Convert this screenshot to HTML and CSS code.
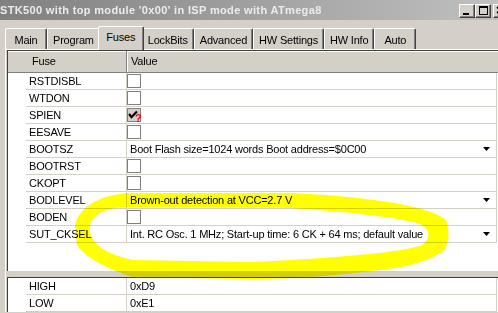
FILE: index.html
```html
<!DOCTYPE html>
<html>
<head>
    <title>STK500</title>
    <meta charset="utf-8">
    <link rel="stylesheet" href="styles.css">
</head>
<body>
    <div class="window">
        <div class="titlebar">
            <span class="title">STK500 with top module '0x00' in ISP mode with ATmega8</span>
            <div class="caption-btns">
                <span class="cbtn"><i class="glyph-min"></i></span>
                <span class="cbtn"><i class="glyph-max"></i></span>
                <span class="cbtn cbtn-close">
                    <svg width="14" height="12" viewBox="0 0 14 12"><path d="M3 2 L9 8 M9 2 L3 8" stroke="#000" stroke-width="1.6"/></svg>
                </span>
            </div>
        </div>

        <div class="tabs">
            <div class="tab">Main</div>
            <div class="tab">Program</div>
            <div class="tab active">Fuses</div>
            <div class="tab">LockBits</div>
            <div class="tab">Advanced</div>
            <div class="tab">HW Settings</div>
            <div class="tab">HW Info</div>
            <div class="tab">Auto</div>
        </div>

        <div class="panel">
            <div class="grid grid-fuses">
                <div class="grid-head">
                    <div class="hcell hcell-name">Fuse</div>
                    <div class="hcell hcell-value">Value</div>
                </div>
                <div class="row"><div class="name">RSTDISBL</div><div class="value"><span class="check"></span></div></div>
                <div class="row"><div class="name">WTDON</div><div class="value"><span class="check"></span></div></div>
                <div class="row">
                    <div class="name">SPIEN</div>
                    <div class="value">
                        <span class="check checked">
                            <svg width="12" height="12" viewBox="0 0 12 12"><path d="M1 4 L3.5 7 L9 1.5" fill="none" stroke="#000" stroke-width="2.2"/></svg>
                            <b class="unsure">?</b>
                        </span>
                    </div>
                </div>
                <div class="row"><div class="name">EESAVE</div><div class="value"><span class="check"></span></div></div>
                <div class="row">
                    <div class="name">BOOTSZ</div>
                    <div class="value"><span>Boot Flash size=1024 words Boot address=$0C00</span><svg class="arrow" width="7" height="4" viewBox="0 0 7 4"><path d="M0 0 H7 L3.5 4 Z"/></svg></div>
                </div>
                <div class="row"><div class="name">BOOTRST</div><div class="value"><span class="check"></span></div></div>
                <div class="row"><div class="name">CKOPT</div><div class="value"><span class="check"></span></div></div>
                <div class="row">
                    <div class="name">BODLEVEL</div>
                    <div class="value"><span>Brown-out detection at VCC=2.7 V</span><svg class="arrow" width="7" height="4" viewBox="0 0 7 4"><path d="M0 0 H7 L3.5 4 Z"/></svg></div>
                </div>
                <div class="row"><div class="name">BODEN</div><div class="value"><span class="check"></span></div></div>
                <div class="row">
                    <div class="name">SUT_CKSEL</div>
                    <div class="value"><span>Int. RC Osc. 1 MHz; Start-up time: 6 CK + 64 ms; default value</span><svg class="arrow" width="7" height="4" viewBox="0 0 7 4"><path d="M0 0 H7 L3.5 4 Z"/></svg></div>
                </div>
            </div>

            <div class="splitter"></div>

            <div class="grid grid-bytes">
                <div class="row"><div class="name">HIGH</div><div class="value"><span>0xD9</span></div></div>
                <div class="row"><div class="name">LOW</div><div class="value"><span>0xE1</span></div></div>
            </div>
        </div>

        <!-- yellow highlighter drawn over the screenshot -->
        <svg class="marker" width="498" height="313" viewBox="0 0 498 313">
            <path fill="#ffff00" fill-rule="evenodd" d="
                M 75 228 C 76 210 95 196 127 193 L 290 193 C 360 196 430 205 446 220 C 450 232 449 244 444 250
                C 430 262 400 268 380 270 C 340 275 300 279 250 279 L 133 277 C 110 270 85 258 77 245 Z
                M 91 236 C 86 222 95 208 127 207 L 290 208 C 350 212 410 218 424 226 C 432 234 428 242 420 246
                C 400 252 340 258 250 262 L 133 260 C 115 256 98 250 91 236 Z"/>
        </svg>
    </div>
</body>
</html>
```

FILE: styles.css
```css
body {
    margin: 0;
    width: 498px;
    height: 313px;
    overflow: hidden;
    background: #d4d0c8;
    font-family: "Liberation Sans", Arial, sans-serif;
    font-size: 11px;
    letter-spacing: -0.2px;
    color: #000;
}
.window {
    position: relative;
    width: 498px;
    height: 313px;
}

/* title bar (inactive) */
.titlebar {
    display: flex;
    justify-content: space-between;
    height: 20px;
    background: linear-gradient(to right, #808080, #c0c0c0);
}
.title {
    font-weight: bold;
    color: #ececec;
    line-height: 20px;
    letter-spacing: 0.35px;
    white-space: nowrap;
}
.caption-btns {
    display: flex;
    align-items: flex-start;
    padding-top: 4px;
    margin-right: -11px;
}
.cbtn {
    position: relative;
    width: 16px;
    height: 14px;
    box-sizing: border-box;
    background: #d4d0c8;
    border: 1px solid;
    border-color: #fff #404040 #404040 #fff;
    box-shadow: inset -1px -1px #808080;
}
.cbtn-close {
    margin-left: 2px;
}
.cbtn-close svg {
    display: block;
}
.glyph-min {
    position: absolute;
    left: 3px;
    top: 8px;
    width: 6px;
    height: 2px;
    background: #000;
}
.glyph-max {
    position: absolute;
    left: 3px;
    top: 1px;
    width: 9px;
    height: 9px;
    box-sizing: border-box;
    border: 1px solid #000;
    border-top-width: 2px;
}

/* tab strip */
.tabs {
    display: flex;
    align-items: flex-end;
    height: 23px;
    margin-top: 6px;
    padding-left: 5px;
}
.tab {
    box-sizing: border-box;
    min-width: 42px;
    height: 21px;
    padding: 2px 5px 0;
    line-height: 18px;
    text-align: center;
    white-space: nowrap;
    background: #d4d0c8;
    border: 1px solid;
    border-bottom: 0;
    border-color: #fff #404040 #fff #fff;
    border-radius: 2px 2px 0 0;
    box-shadow: inset -1px 0 #808080;
}
.tab.active {
    position: relative;
    z-index: 1;
    min-width: 46px;
    height: 24px;
    padding: 1px 7px 0;
    margin: 0 -2px -1px;
}

/* tab page */
.panel {
    margin-left: 5px;
    padding-left: 1px;
    border-top: 1px solid #fff;
    border-left: 1px solid #fff;
}
.grid {
    background: #fff;
    border-top: 1px solid #404040;
    border-left: 1px solid #404040;
}
.grid-fuses {
    height: 220px;
}
.grid-head {
    display: flex;
    height: 21px;
    background: #d4d0c8;
    border-bottom: 1px solid #808080;
    box-shadow: inset 0 1px #fff;
    line-height: 21px;
}
.hcell-name {
    box-sizing: border-box;
    width: 119px;
    padding-left: 24px;
    border-right: 1px solid #808080;
}
.hcell-value {
    flex: 1;
    padding-left: 4px;
    box-shadow: inset 1px 0 #fff;
}
.row {
    display: flex;
    height: 17px;
    line-height: 16px;
}
.row .name {
    box-sizing: border-box;
    width: 101px;
    margin-left: 18px;
    padding-left: 3px;
    border-right: 1px solid #d4d0c8;
    border-bottom: 1px solid #d4d0c8;
    white-space: nowrap;
}
.row .value {
    box-sizing: border-box;
    width: 370px;
    display: flex;
    align-items: center;
    justify-content: space-between;
    padding-left: 3px;
    border-right: 1px solid #d4d0c8;
    border-bottom: 1px solid #d4d0c8;
    white-space: nowrap;
}
.arrow {
    display: block;
    margin-right: 6px;
}
.check {
    position: relative;
    box-sizing: border-box;
    width: 14px;
    height: 14px;
    margin-left: -3px;
    border: 1px solid #808080;
    background: #fff;
}
.check.checked {
    background: #d4d0c8;
}
.check svg {
    display: block;
    margin: 1px 0 0 0;
}
.unsure {
    position: absolute;
    left: 7px;
    top: 4px;
    color: #ff0000;
    font-size: 11px;
    line-height: 11px;
    letter-spacing: 0;
}
.splitter {
    height: 6px;
}

/* freehand highlight */
.marker {
    position: absolute;
    left: 0;
    top: 0;
    pointer-events: none;
    mix-blend-mode: multiply;
}
```
